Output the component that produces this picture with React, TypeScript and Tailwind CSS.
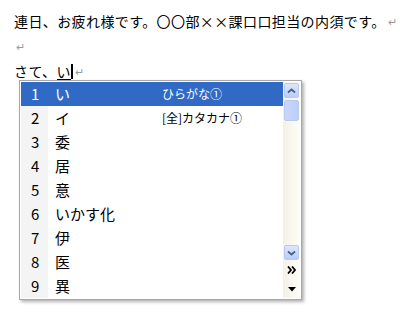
const candidates = [
  { n: '1', text: 'い', note: 'ひらがな①' },
  { n: '2', text: 'イ', note: '[全]カタカナ①' },
  { n: '3', text: '委', note: '' },
  { n: '4', text: '居', note: '' },
  { n: '5', text: '意', note: '' },
  { n: '6', text: 'いかす化', note: '' },
  { n: '7', text: '伊', note: '' },
  { n: '8', text: '医', note: '' },
  { n: '9', text: '異', note: '' },
]

function ReturnMark() {
  return <span className="ml-[2px] text-[11px] text-[#9a9a9a] align-top">↵</span>
}

function ScrollButton({ down }: { down?: boolean }) {
  return (
    <div className="mx-auto h-[15px] w-[15px] rounded-[2px] border border-[#b9c9ef] bg-gradient-to-b from-[#dde7fd] to-[#b9cdf8] flex items-center justify-center">
      <svg width="9" height="6" viewBox="0 0 9 6">
        <path
          d={down ? 'M1 1.5 L4.5 4.5 L8 1.5' : 'M1 4.5 L4.5 1.5 L8 4.5'}
          fill="none"
          stroke="#4d6185"
          strokeWidth="1.8"
        />
      </svg>
    </div>
  )
}

export default function App() {
  return (
    <div className="relative w-[400px] h-[320px] overflow-hidden bg-white text-black font-['Noto_Sans_CJK_JP',sans-serif]">
      <div className="pl-[14px] pt-[9px] text-[14px] leading-[25px] tracking-[0.4px]">
        <div>
          連日、お疲れ様です。〇〇部××課口口担当の内須です。<ReturnMark />
        </div>
        <div>
          <ReturnMark />
        </div>
        <div className="flex items-center">
          <span>さて、</span>
          <span className="border-b-2 border-black leading-[16px]">い</span>
          <span className="w-[2px] h-[15px] bg-black" />
          <ReturnMark />
        </div>
      </div>

      <div className="absolute left-[19px] top-[80px] w-[283px] h-[220px] border border-[#a7a6aa] bg-white p-[1px] shadow-[2px_2px_3px_rgba(0,0,0,0.3)] flex">
        <div className="w-[262px] flex flex-col">
          {candidates.map((c, i) => {
            const active = i === 0
            return (
              <div
                key={c.n}
                className={`h-[24px] flex items-center ${active ? 'bg-[#316ac5] text-white' : ''}`}
              >
                <div
                  className={`w-[27px] h-full pl-[10px] flex items-center text-[15px] ${active ? '' : 'bg-[#f4f4f4]'}`}
                >
                  {c.n}
                </div>
                <div className="w-[114px] pl-[7px] text-[15px]">{c.text}</div>
                <div className="text-[12px]">{c.note}</div>
              </div>
            )
          })}
        </div>
        <div className="w-[17px] bg-gradient-to-r from-[#f3f1e7] to-[#fdfcf8] flex flex-col pt-[1px]">
          <ScrollButton />
          <div className="mx-auto mt-[2px] h-[21px] w-[15px] rounded-[2px] border border-[#b9c9ef] bg-gradient-to-r from-[#c8d7fb] to-[#bccffa]" />
          <div className="flex-1" />
          <ScrollButton down />
          <div className="h-[20px] flex items-center justify-center">
            <svg width="10" height="8" viewBox="0 0 10 8">
              <path d="M1 0.5 L4 4 L1 7.5 M5 0.5 L8 4 L5 7.5" fill="none" stroke="#000" strokeWidth="1.8" />
            </svg>
          </div>
          <div className="h-[18px] flex items-center justify-center">
            <svg width="8" height="5" viewBox="0 0 8 5">
              <path d="M0 0 L8 0 L4 4.5 Z" fill="#000" />
            </svg>
          </div>
        </div>
      </div>
    </div>
  )
}
